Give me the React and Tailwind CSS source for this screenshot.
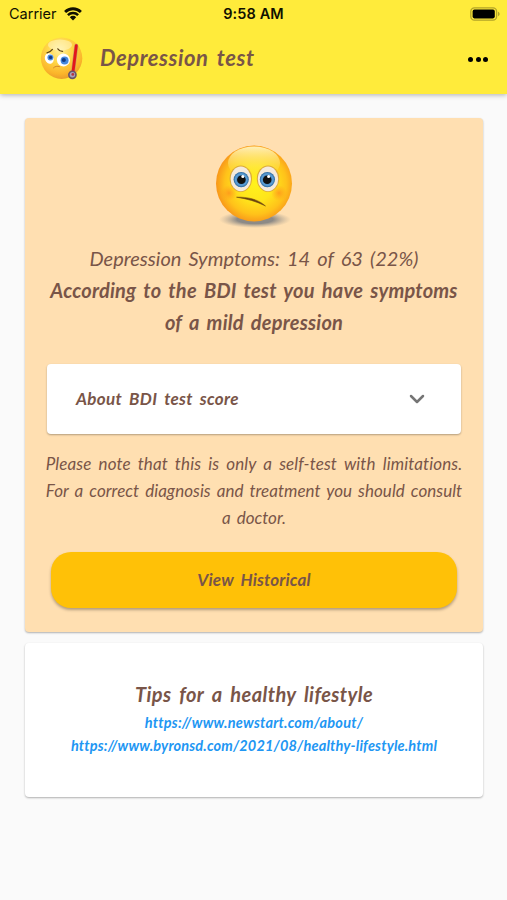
import React, { useState } from 'react';
import { ChevronDown } from 'lucide-react';

const tips = [
  { url: 'https://www.newstart.com/about/', className: 'tracking-[0.21px]' },
  { url: 'https://www.byronsd.com/2021/08/healthy-lifestyle.html', className: 'tracking-[0.16px]' },
];

const WifiIcon = () => (
  <svg width="18" height="14" viewBox="0 0 18 14" fill="none" stroke="#111000">
    <path d="M1.1 5A11.4 11.4 0 0 1 16.9 5" strokeWidth="2.9" />
    <path d="M3.9 8.1A7.2 7.2 0 0 1 14.1 8.1" strokeWidth="2.5" />
    <path d="M9 13.4 5.8 10.2a4.5 4.5 0 0 1 6.4 0z" fill="#111000" stroke="none" />
  </svg>
);

const BatteryIcon = () => (
  <svg width="30" height="14" viewBox="0 0 30 14">
    <rect x="0.8" y="0.8" width="25.8" height="12.4" rx="3.6" fill="none" stroke="#b3a429" strokeWidth="1.3" />
    <rect x="2.6" y="2.6" width="22.2" height="8.8" rx="1.8" fill="#000" />
    <path d="M28 4.8v4.4c1-.4 1.6-1.2 1.6-2.2S29 5.2 28 4.8z" fill="#b3a429" />
  </svg>
);

const SickFace = () => (
  <svg width="44" height="46" viewBox="0 0 44 46">
    <defs>
      <radialGradient id="sickSkin" cx="0.45" cy="0.3" r="0.72">
        <stop offset="0" stopColor="#fff0a0" />
        <stop offset="0.4" stopColor="#ffd84a" />
        <stop offset="0.8" stopColor="#fbb52a" />
        <stop offset="1" stopColor="#e99a2b" />
      </radialGradient>
    </defs>
    <circle cx="21.6" cy="22.2" r="20.7" fill="url(#sickSkin)" />
    <ellipse cx="20" cy="9" rx="12" ry="5.5" fill="#fff8cf" opacity="0.5" />
    <ellipse cx="9.3" cy="22.5" rx="4.4" ry="5.4" fill="#fff" transform="rotate(-18 9.3 22.5)" />
    <ellipse cx="23.4" cy="24" rx="6.6" ry="6.4" fill="#fff" transform="rotate(20 23.4 24)" />
    <circle cx="10.4" cy="21.6" r="3" fill="#4c8ee0" />
    <circle cx="10.6" cy="21.4" r="1.7" fill="#123b86" />
    <circle cx="24.6" cy="24.4" r="4" fill="#4488df" />
    <circle cx="23.8" cy="24" r="2.1" fill="#123b86" />
    <path d="M7 16.8c2.4-.6 4-1.5 5.4-3.4M17.8 12.8c1.2 1.7 2.8 2.6 4.8 2.5" fill="none" stroke="#5d4314" strokeWidth="1.2" strokeLinecap="round" />
    <path d="M13.5 31.8c1.6-1.5 3.7-2 6-1.2" fill="none" stroke="#d3852a" strokeWidth="1" strokeLinecap="round" />
    <path d="M36.3 9.8 33 36" stroke="#c99a5e" strokeWidth="4" strokeLinecap="round" />
    <path d="M36.3 9.6 33 36" stroke="#e3141c" strokeWidth="2.8" strokeLinecap="round" />
    <circle cx="32.4" cy="38.8" r="4.4" fill="#685468" />
    <circle cx="32.4" cy="38.8" r="2.7" fill="#a6a3bc" />
    <circle cx="32.8" cy="38.4" r="1.4" fill="#b5343e" />
  </svg>
);

const WorriedFace = () => (
  <svg width="80" height="84" viewBox="0 0 80 84">
    <defs>
      <radialGradient id="skin" cx="0.52" cy="0.5" r="0.52">
        <stop offset="0" stopColor="#fff21c" />
        <stop offset="0.45" stopColor="#ffe51b" />
        <stop offset="0.78" stopColor="#ffc21a" />
        <stop offset="1" stopColor="#f8961a" />
      </radialGradient>
      <linearGradient id="shine" x1="0" y1="0" x2="0" y2="1">
        <stop offset="0" stopColor="#fff0b8" />
        <stop offset="1" stopColor="#ffe93a" stopOpacity="0" />
      </linearGradient>
      <radialGradient id="iris">
        <stop offset="0.35" stopColor="#3777b2" />
        <stop offset="0.75" stopColor="#5d9fd6" />
        <stop offset="1" stopColor="#24629b" />
      </radialGradient>
      <radialGradient id="blush">
        <stop offset="0" stopColor="#ff8a1c" stopOpacity="0.7" />
        <stop offset="1" stopColor="#ff9a1c" stopOpacity="0" />
      </radialGradient>
      <radialGradient id="ground">
        <stop offset="0.5" stopColor="#8d8a86" />
        <stop offset="1" stopColor="#b9aa96" stopOpacity="0" />
      </radialGradient>
    </defs>
    <ellipse cx="41" cy="75.5" rx="36" ry="8.5" fill="url(#ground)" />
    <circle cx="40" cy="39.5" r="38" fill="url(#skin)" />
    <ellipse cx="40" cy="19" rx="26" ry="16.5" fill="url(#shine)" />
    <circle cx="15" cy="49" r="8" fill="url(#blush)" />
    <circle cx="65" cy="49" r="8" fill="url(#blush)" />
    <ellipse cx="26.8" cy="34.7" rx="11.2" ry="13.2" fill="#dba93a" />
    <ellipse cx="54" cy="34.7" rx="11.2" ry="13.2" fill="#dba93a" />
    <ellipse cx="26.8" cy="34.9" rx="10.2" ry="12.3" fill="#f5eadb" />
    <ellipse cx="54" cy="34.9" rx="10.2" ry="12.3" fill="#f5eadb" />
    <circle cx="27.2" cy="35.6" r="7.6" fill="url(#iris)" />
    <circle cx="53.4" cy="35.6" r="7.6" fill="url(#iris)" />
    <circle cx="27.4" cy="35.8" r="4.3" fill="#101010" />
    <circle cx="53.2" cy="35.8" r="4.3" fill="#101010" />
    <circle cx="28.8" cy="32.4" r="1.5" fill="#fff" />
    <circle cx="54.6" cy="32.4" r="1.5" fill="#fff" />
    <path d="M22.5 53.2C33 52.8 44 55 51.5 62 42.500 57.500 33 54.800 22.500 53.200z" fill="#6a4210" stroke="#6a4210" strokeWidth="0.5" />
  </svg>
);

const App = () => {
  const [open, setOpen] = useState(false);

  return (
    <div className="min-h-screen overflow-hidden bg-[#fafafa] font-['Lato',sans-serif] text-[#795548]">
      <header className="h-[94px] bg-[#ffeb3b] shadow-[0_1px_5px_rgba(0,0,0,0.3)]">
        <div className="grid h-[27px] grid-cols-3 items-center px-[7px] font-['Inter',sans-serif] text-[#111000]">
          <div className="flex items-center gap-[7px] pl-[2px] text-[14.5px]">
            <span>Carrier</span>
            <WifiIcon />
          </div>
          <div className="text-center text-[14.5px] font-semibold tracking-[0.1px] whitespace-nowrap">9:58 AM</div>
          <div className="flex justify-end"><BatteryIcon /></div>
        </div>
        <div className="flex h-[64px] items-center pl-10 pr-[19px]">
          <SickFace />
          <h1 className="ml-4 flex-1 pb-[3px] text-[22px] font-bold italic tracking-[0.55px] whitespace-nowrap [word-spacing:3px]">Depression test</h1>
          <button aria-label="More" className="flex gap-[2.5px]">
            <span className="size-[5px] rounded-full bg-black"></span>
            <span className="size-[5px] rounded-full bg-black"></span>
            <span className="size-[5px] rounded-full bg-black"></span>
          </button>
        </div>
      </header>

      <main className="flex flex-col gap-[11px] pt-6 pr-6 pl-[25px]">
        <section className="flex h-[514px] flex-col items-center rounded-[4px] bg-[#ffdfb1] pt-[26px] text-center italic shadow-[0_1px_2px_rgba(0,0,0,0.3)]">
          <WorriedFace />
          <div className="mt-[14px] flex flex-col items-center text-[20px] leading-[32px] whitespace-nowrap">
            <p className="[word-spacing:2.4px]">Depression Symptoms: 14 of 63 (22%)</p>
            <p className="font-bold tracking-[0.2px] [word-spacing:2.5px]">According to the BDI test you have symptoms</p>
            <p className="font-bold tracking-[0.2px] [word-spacing:2.5px]">of a mild depression</p>
          </div>

          <button
            onClick={() => setOpen(!open)}
            className="mt-[26px] flex h-[70px] w-[414px] items-center justify-between rounded-[4px] bg-white pr-[32px] pl-[29px] shadow-[0_1px_2px_rgba(0,0,0,0.3)]"
          >
            <span className="pb-px text-[17px] font-bold italic tracking-[0.3px] whitespace-nowrap [word-spacing:3px]">About BDI test score</span>
            <ChevronDown size={24} strokeWidth={2.5} className="text-[#757575]" />
          </button>

          <div className="mt-4 flex flex-col items-center text-[17px] leading-[27px] whitespace-nowrap">
            <p className="tracking-[0.12px] [word-spacing:3px]">Please note that this is only a self-test with limitations.</p>
            <p className="tracking-[0.04px] [word-spacing:2px]">For a correct diagnosis and treatment you should consult</p>
            <p className="[word-spacing:2px]">a doctor.</p>
          </div>

          <button className="mt-[21px] h-[56px] w-[406px] rounded-[20px] bg-[#ffc107] pb-px text-[17px] font-bold italic tracking-[0.15px] [word-spacing:3px] shadow-[0_2px_3px_rgba(0,0,0,0.3)]">
            View Historical
          </button>
        </section>

        <section className="flex h-[154px] flex-col items-center rounded-[4px] bg-white pt-[37px] font-bold italic shadow-[0_1px_2px_rgba(0,0,0,0.3)]">
          <h2 className="text-[20px] leading-[28px] tracking-[0.4px] whitespace-nowrap [word-spacing:3px]">Tips for a healthy lifestyle</h2>
          <div className="mt-[3px] flex flex-col items-center text-[14.5px] leading-[23px] text-[#2196f3]">
            {tips.map(tip => (
              <a key={tip.url} href={tip.url} className={tip.className}>{tip.url}</a>
            ))}
          </div>
        </section>
      </main>
    </div>
  );
};

export default App;
